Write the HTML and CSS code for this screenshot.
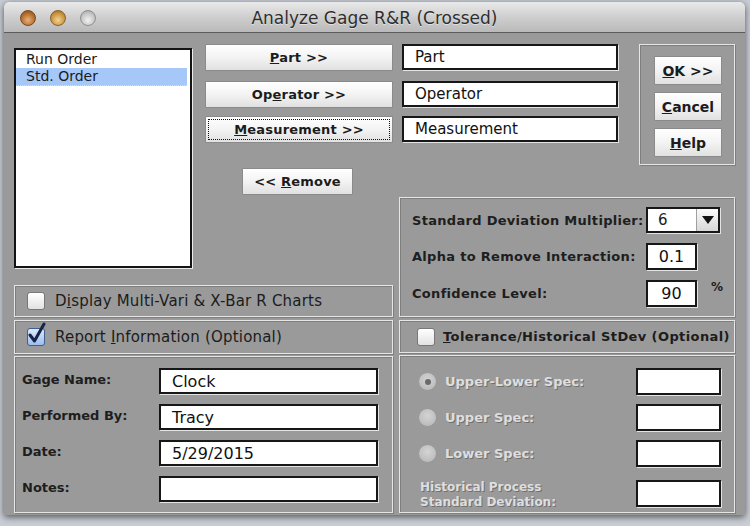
FILE: index.html
```html
<!DOCTYPE html>
<html lang="en">
<head>
  <meta charset="UTF-8">
  <title>Analyze Gage R&amp;R (Crossed)</title>
  <link rel="stylesheet" href="styles.css">
</head>
<body>
  <div class="window">
    <div class="titlebar">
      <div class="lights">
        <span class="light close"></span>
        <span class="light mini"></span>
        <span class="light zoom"></span>
      </div>
      <div class="title">Analyze Gage R&amp;R (Crossed)</div>
      <div></div>
    </div>

    <div class="content">
      <!-- Left column -->
      <div class="col">
        <div class="picker">
          <div class="listbox">
            <div class="item">Run Order</div>
            <div class="item selected">Std. Order</div>
          </div>
          <div class="assign">
            <button class="btn"><span><u>P</u>art &gt;&gt;</span></button>
            <button class="btn gap-10"><span>Op<u>e</u>rator &gt;&gt;</span></button>
            <button class="btn gap-8 focus"><span><u>M</u>easurement &gt;&gt;</span></button>
            <button class="btn remove"><span>&lt;&lt; <u>R</u>emove</span></button>
          </div>
        </div>

        <div class="group check-row charts">
          <span class="checkbox"></span>
          <span class="check-label">D<u>i</u>splay Multi-Vari &amp; X-Bar R Charts</span>
        </div>

        <div class="group check-row report">
          <span class="checkbox checked">
            <svg width="22" height="24" viewBox="0 0 22 24">
              <path d="M4 13 L8.5 19 L18 2" fill="none" stroke="#16234a" stroke-width="3" stroke-linecap="round" stroke-linejoin="round"/>
            </svg>
          </span>
          <span class="check-label">Report <u>I</u>nformation (Optional)</span>
        </div>

        <div class="group info">
          <div class="info-row">
            <span class="label">Gage Name:</span>
            <span class="field">Clock</span>
          </div>
          <div class="info-row">
            <span class="label">Performed By:</span>
            <span class="field">Tracy</span>
          </div>
          <div class="info-row">
            <span class="label">Date:</span>
            <span class="field">5/29/2015</span>
          </div>
          <div class="info-row">
            <span class="label">Notes:</span>
            <span class="field"></span>
          </div>
        </div>
      </div>

      <!-- Right column -->
      <div class="col">
        <div class="targets">
          <div class="target-fields">
            <span class="field">Part</span>
            <span class="field gap-10">Operator</span>
            <span class="field gap-8">Measurement</span>
          </div>
          <div class="group actions">
            <button class="btn small"><span><u>O</u>K &gt;&gt;</span></button>
            <button class="btn small"><span><u>C</u>ancel</span></button>
            <button class="btn small"><span><u>H</u>elp</span></button>
          </div>
        </div>

        <div class="group options">
          <div class="opt-row">
            <span class="label wide">Standard Deviation Multiplier:</span>
            <span class="select">
              <span class="select-value">6</span>
              <span class="select-arrow"></span>
            </span>
          </div>
          <div class="opt-row">
            <span class="label wide">Alpha to Remove Interaction:</span>
            <span class="field num">0.1</span>
          </div>
          <div class="opt-row">
            <span class="label wide">Confidence Level:</span>
            <span class="field num">90</span>
            <span class="percent">%</span>
          </div>
        </div>

        <div class="group check-row tolerance">
          <span class="checkbox"></span>
          <span class="check-label bold"><u>T</u>olerance/Historical StDev (Optional)</span>
        </div>

        <div class="group specs">
          <div class="spec-row">
            <span class="radio on"></span>
            <span class="dim">Upper-Lower Spec:</span>
            <span class="field spec"></span>
          </div>
          <div class="spec-row">
            <span class="radio"></span>
            <span class="dim">Upper Spec:</span>
            <span class="field spec"></span>
          </div>
          <div class="spec-row">
            <span class="radio"></span>
            <span class="dim">Lower Spec:</span>
            <span class="field spec"></span>
          </div>
          <div class="spec-row">
            <span class="dim hist">Historical Process<br>Standard Deviation:</span>
            <span class="field spec"></span>
          </div>
        </div>
      </div>
    </div>
  </div>
</body>
</html>
```

FILE: styles.css
```css
body {
  margin: 0;
  height: 526px;
  overflow: hidden;
  background: #c9ced6;
  font-family: "DejaVu Sans", sans-serif;
  color: #1c1c1c;
}
.window {
  margin: 2px 5px 0 4px;
  width: 741px;
  background: #9a9a9a;
  border-radius: 5px 5px 0 0;
  box-shadow: 0 2px 7px rgba(0,0,0,0.6);
  overflow: hidden;
}
.titlebar {
  height: 30px;
  display: grid;
  grid-template-columns: 1fr auto 1fr;
  align-items: center;
  background: linear-gradient(#e9e9e9, #cfcfcf 50%, #b9b9b9);
  border-bottom: 1px solid #5c5c5c;
}
.lights {
  display: flex;
  gap: 14px;
  padding-left: 16px;
  padding-top: 1px;
}
.light {
  width: 16px;
  height: 16px;
  border-radius: 50%;
  box-sizing: border-box;
}
.close {
  background: radial-gradient(circle at 50% 65%, #e8b27a, #b26a2c 60%, #7d4314);
  border: 1px solid #7a4a20;
}
.mini {
  background: radial-gradient(circle at 50% 65%, #f4d494, #c9923e 60%, #8c5e1e);
  border: 1px solid #8a6226;
}
.zoom {
  background: radial-gradient(circle at 50% 65%, #f2f2f2, #c4c4c4 60%, #9a9a9a);
  border: 1px solid #8f8f8f;
}
.title {
  font-size: 17px;
  color: #2e2e2e;
  text-shadow: 0 1px 0 rgba(255,255,255,0.5);
  padding-top: 1px;
}
.content {
  display: grid;
  grid-template-columns: 379px 336px;
  column-gap: 6px;
  padding: 11px 10px 2px;
}
.col {
  display: flex;
  flex-direction: column;
}

/* shared controls */
.btn {
  box-sizing: border-box;
  height: 27px;
  padding: 0;
  border: 1px solid #8a8a8a;
  border-radius: 1px;
  background: linear-gradient(#ffffff, #f3f3f3 50%, #e1e1e1);
  font: bold 13px "DejaVu Sans", sans-serif;
  letter-spacing: 0.2px;
  color: #1c1c1c;
  display: flex;
  align-items: center;
  justify-content: center;
}
.btn.focus {
  outline: 1px dotted #111;
  outline-offset: -4px;
}
.gap-10 { margin-top: 10px; }
.gap-8 { margin-top: 8px; }
.field {
  box-sizing: border-box;
  height: 27px;
  display: flex;
  align-items: center;
  padding-left: 10px;
  background: #fff;
  border: 2px solid #171717;
  box-shadow: 1px 1px 0 #e4e4e4;
  font-size: 15px;
  color: #111;
}
.group {
  box-sizing: border-box;
  border: 1px solid #e6e6e6;
  box-shadow: inset 1px 1px 0 #7e7e7e, 1px 1px 0 #7e7e7e;
}
.label {
  font: bold 13px "DejaVu Sans", sans-serif;
  color: #1e1e1e;
}

/* picker */
.picker {
  display: flex;
  height: 241px;
}
.listbox {
  box-sizing: border-box;
  margin-top: 4px;
  width: 178px;
  height: 220px;
  padding-top: 1px;
  background: #fff;
  border: 2px solid #141414;
  box-shadow: 1px 1px 0 #ececec;
}
.item {
  height: 17px;
  line-height: 17px;
  padding-left: 10px;
  margin-right: 3px;
  font-size: 14px;
}
.item.selected {
  background: #a6c8f8;
  border-bottom: 1px dotted #d0e0f6;
}
.assign {
  margin-left: 13px;
  width: 188px;
  display: flex;
  flex-direction: column;
}
.btn.remove {
  margin: 25px 0 0 37px;
  width: 111px;
}

/* check rows */
.check-row {
  display: flex;
  align-items: center;
  padding-left: 12px;
  gap: 10px;
}
.charts { height: 32px; }
.report { height: 34px; margin-top: 3px; }
.checkbox {
  box-sizing: border-box;
  width: 18px;
  height: 18px;
  border-radius: 3px;
  border: 1px solid #787878;
  background: linear-gradient(#ffffff, #e2e2e2);
  position: relative;
  flex: none;
}
.checkbox.checked {
  border-color: #3d5f92;
  background: linear-gradient(#dde9fa, #9dbfee);
}
.checkbox svg {
  position: absolute;
  left: -2px;
  top: -7px;
}
.check-label {
  font-size: 15px;
  letter-spacing: 0.2px;
  color: #1c1c1c;
}
.check-label.bold {
  font-weight: bold;
  font-size: 13px;
  letter-spacing: 0.4px;
}

/* report info */
.info {
  height: 157px;
  margin-top: 2px;
  padding: 11px 0 0 7px;
  display: flex;
  flex-direction: column;
  gap: 10px;
}
.info-row {
  display: flex;
  align-items: flex-start;
}
.info-row .label {
  width: 137px;
  padding-top: 4px;
}
.info-row .field {
  width: 219px;
  height: 26px;
  padding-left: 11px;
  font-size: 16px;
}

/* targets */
.targets {
  display: flex;
  height: 121px;
}
.target-fields {
  margin-left: 3px;
  width: 216px;
  display: flex;
  flex-direction: column;
}
.target-fields .field {
  height: 26px;
  padding-left: 11px;
}
.target-fields .gap-10 { margin-top: 11px; }
.target-fields .gap-8 { margin-top: 9px; }
.actions {
  margin-left: 21px;
  width: 96px;
  padding: 11px 12px 0 14px;
  display: flex;
  flex-direction: column;
  gap: 7px;
}
.btn.small {
  height: 29px;
  font-size: 14px;
  letter-spacing: 0;
}

/* options */
.options {
  height: 120px;
  margin-top: 32px;
  padding: 9px 0 0 12px;
  display: flex;
  flex-direction: column;
  gap: 10px;
}
.opt-row {
  display: flex;
  align-items: center;
}
.opt-row .label {
  width: 234px;
  letter-spacing: 0.3px;
}
.select {
  box-sizing: border-box;
  width: 74px;
  height: 26px;
  display: flex;
  background: #fff;
  border: 2px solid #171717;
  box-shadow: 1px 1px 0 #e4e4e4;
}
.select-value {
  flex: 1;
  padding-left: 10px;
  font-size: 15px;
  line-height: 22px;
}
.select-arrow {
  width: 21px;
  background: linear-gradient(#fafafa, #d8d8d8);
  border-left: 1px solid #a0a0a0;
  display: flex;
  align-items: center;
  justify-content: center;
}
.select-arrow::after {
  content: "";
  border-left: 6px solid transparent;
  border-right: 6px solid transparent;
  border-top: 8px solid #111;
}
.field.num {
  width: 51px;
  padding: 0;
  justify-content: center;
  font-size: 16px;
}
.percent {
  align-self: flex-start;
  margin: 0 0 0 14px;
  font: bold 12px "DejaVu Sans", sans-serif;
}

/* tolerance */
.tolerance {
  height: 33px;
  margin-top: 3px;
  padding-left: 17px;
  gap: 8px;
}
.specs {
  height: 158px;
  margin-top: 2px;
  padding: 12px 0 0 18px;
  display: flex;
  flex-direction: column;
  gap: 9px;
}
.spec-row {
  display: flex;
  align-items: center;
}
.radio {
  box-sizing: border-box;
  width: 19px;
  height: 19px;
  border-radius: 50%;
  border: 1px solid #9a9a9a;
  background: radial-gradient(circle at 50% 40%, #d4d4d4, #b4b4b4);
  display: flex;
  align-items: center;
  justify-content: center;
  flex: none;
}
.radio.on::after {
  content: "";
  width: 6px;
  height: 6px;
  border-radius: 50%;
  background: #6a6a6a;
}
.dim {
  margin-left: 8px;
  width: 191px;
  font: bold 13px "DejaVu Sans", sans-serif;
  color: #dedede;
  text-shadow: 1px 1px 0 #707070;
}
.dim.hist {
  margin-left: 2px;
  width: 216px;
  font-size: 12px;
  line-height: 15px;
  padding-top: 4px;
}
.field.spec {
  width: 85px;
  height: 27px;
}
```
